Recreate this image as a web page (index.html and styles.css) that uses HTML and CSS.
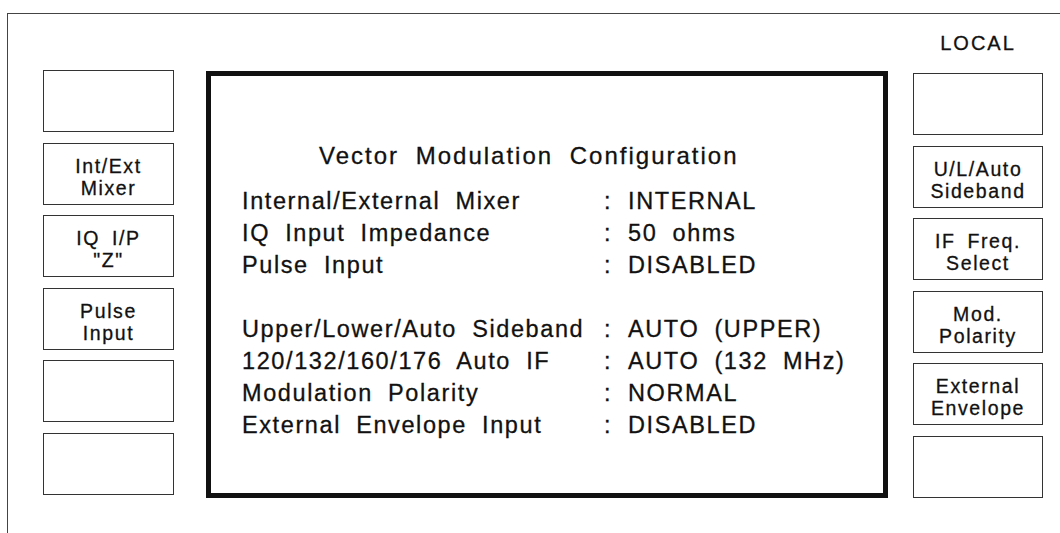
FILE: index.html
```html
<!DOCTYPE html>
<html lang="en">
<head>
    <meta charset="UTF-8">
    <meta name="viewport" content="width=device-width, initial-scale=1.0">
    <title>Vector Modulation Configuration</title>
    <link rel="stylesheet" href="styles.css">
</head>
<body>

    <div class="screen">

        <!-- Status line -->
        <div class="status-row">
            <div class="status">LOCAL</div>
        </div>

        <div class="panel">

            <!-- Left soft keys -->
            <div class="keys">
                <div class="key"></div>
                <div class="key"><span>Int/Ext</span><span>Mixer</span></div>
                <div class="key"><span>IQ I/P</span><span>"Z"</span></div>
                <div class="key"><span>Pulse</span><span>Input</span></div>
                <div class="key"></div>
                <div class="key"></div>
            </div>

            <!-- Main display -->
            <div class="display">
                <div class="title">Vector Modulation Configuration</div>
                <div class="settings">
                    <span class="label">Internal/External Mixer</span><span class="colon">:</span><span class="value">INTERNAL</span>
                    <span class="label">IQ Input Impedance</span><span class="colon">:</span><span class="value">50 ohms</span>
                    <span class="label">Pulse Input</span><span class="colon">:</span><span class="value">DISABLED</span>
                    <span class="gap"></span>
                    <span class="label">Upper/Lower/Auto Sideband</span><span class="colon">:</span><span class="value">AUTO (UPPER)</span>
                    <span class="label">120/132/160/176 Auto IF</span><span class="colon">:</span><span class="value">AUTO (132 MHz)</span>
                    <span class="label">Modulation Polarity</span><span class="colon">:</span><span class="value">NORMAL</span>
                    <span class="label">External Envelope Input</span><span class="colon">:</span><span class="value">DISABLED</span>
                </div>
            </div>

            <!-- Right soft keys -->
            <div class="keys keys-right">
                <div class="key"></div>
                <div class="key"><span>U/L/Auto</span><span>Sideband</span></div>
                <div class="key"><span>IF Freq.</span><span>Select</span></div>
                <div class="key"><span>Mod.</span><span>Polarity</span></div>
                <div class="key"><span>External</span><span>Envelope</span></div>
                <div class="key"></div>
            </div>

        </div>
    </div>

</body>
</html>
```

FILE: styles.css
```css
body {
    margin: 0;
    background-color: #fff;
    color: #111;
    font-family: "Liberation Sans", Arial, sans-serif;
    overflow: hidden;
    -webkit-text-stroke: 0.3px #111;
}

.screen {
    margin: 13px 0 0 7px;
    height: 519px;
    border-top: 1px solid #444;
    border-left: 1px solid #444;
}

.status-row {
    display: flex;
    justify-content: flex-end;
    padding-top: 18px;
    padding-right: 15px;
}

.status {
    width: 134px;
    text-align: center;
    font-size: 20px;
    line-height: 22px;
    letter-spacing: 2px;
}

.panel {
    display: flex;
    align-items: flex-start;
    margin-top: 16px;
    padding-left: 35px;
}

.keys {
    width: 131px;
    display: flex;
    flex-direction: column;
    gap: 10.6px;
}

.keys-right {
    width: 130px;
    margin-left: 25px;
    margin-top: 3px;
}

.key {
    height: 62px;
    box-sizing: border-box;
    padding-top: 6px;
    border: 1px solid #333;
    display: flex;
    flex-direction: column;
    justify-content: center;
    align-items: center;
    font-size: 19.5px;
    line-height: 22px;
    letter-spacing: 1.6px;
    word-spacing: 5px;
}

.display {
    box-sizing: border-box;
    width: 682px;
    height: 427px;
    margin-left: 32px;
    margin-top: 1px;
    border: 5px solid #111;
    padding-top: 64px;
    font-size: 23.5px;
    line-height: 32px;
    letter-spacing: 1.6px;
    word-spacing: 7px;
}

.title {
    padding-left: 108px;
    margin-bottom: 13px;
    font-size: 24px;
    letter-spacing: 2px;
    word-spacing: 8px;
}

.settings {
    display: grid;
    grid-template-columns: 362px 24px auto;
    padding-left: 31px;
}

.gap {
    grid-column: 1 / 4;
    height: 32px;
}
```
